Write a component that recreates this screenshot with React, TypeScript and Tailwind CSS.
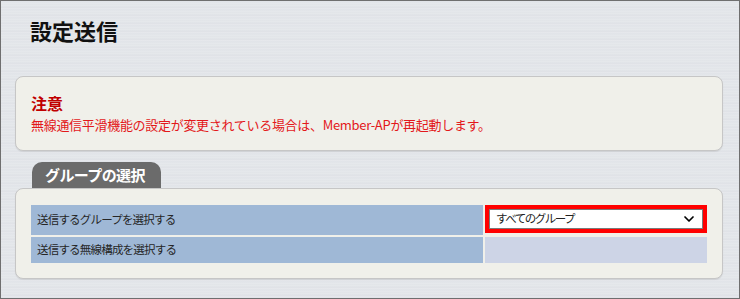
import { ChevronDown } from "lucide-react";

const rows = [
  { label: "送信するグループを選択する", select: true },
  { label: "送信する無線構成を選択する", select: false },
];

export default function App() {
  return (
    <div className="w-[740px] h-[299px] overflow-hidden border border-[#6f6f6f] bg-[#e4e7eb] bg-[repeating-linear-gradient(180deg,#e7eaee_0px,#dcdfe4_1px,#e9ecef_2px,#e1e4e8_3px,#e6e9ec_5px,#dde0e5_6px,#e8eaee_8px)] font-['Noto_Sans_CJK_JP','Noto_Sans',sans-serif] text-[#222]">
      <h1 className="ml-[29px] mt-[16px] text-[22px] leading-[27px] font-bold text-[#111]">設定送信</h1>

      <div className="mt-[32px] ml-[14px] w-[708px] h-[75px] rounded-[8px] border border-[#c6c6c6] bg-[#f0f0ea] pl-[15px] pt-[16px] shadow-[0_1px_1px_rgba(0,0,0,0.08)]">
        <div className="text-[16px] leading-[20px] font-bold text-[#c00000]">注意</div>
        <p className="mt-[4px] text-[13px] leading-[16px] tracking-[-0.3px] text-[#e3181b]">
          無線通信平滑機能の設定が変更されている場合は、Member-APが再起動します。
        </p>
      </div>

      <div className="mt-[11px] ml-[31px] w-[129px] h-[26px] rounded-t-[10px] bg-[#6b6b6b] pl-[13px] text-[15px] leading-[26px] font-bold tracking-[-0.6px] text-white">
        グループの選択
      </div>

      <div className="ml-[14px] w-[708px] h-[91px] rounded-[8px] border border-[#c6c6c6] bg-[#f0f0ea] pl-[15px] pt-[16px] shadow-[0_1px_1px_rgba(0,0,0,0.08)]">
        <div className="grid w-[676px] grid-cols-[452px_222px] grid-rows-[30px_26px] gap-[2px]">
          {rows.map((row) => (
            <div key={row.label} className="contents">
              <div className="flex items-center bg-[#9fb8d6] pl-[6px] text-[11.5px] tracking-[-0.8px] text-[#262626]">
                {row.label}
              </div>
              {row.select ? (
                <div className="h-[28px] border-[4px] border-[#ff0000] bg-white">
                  <div className="flex h-full items-center justify-between border border-[#7a7a7a] pl-[6px] pr-[5px] text-[11.5px] tracking-[-1.5px] text-[#222]">
                    <span>すべてのグループ</span>
                    <ChevronDown className="h-[16px] w-[16px] text-black" strokeWidth={2.6} />
                  </div>
                </div>
              ) : (
                <div className="bg-[#cdd4e6]" />
              )}
            </div>
          ))}
        </div>
      </div>
    </div>
  );
}
